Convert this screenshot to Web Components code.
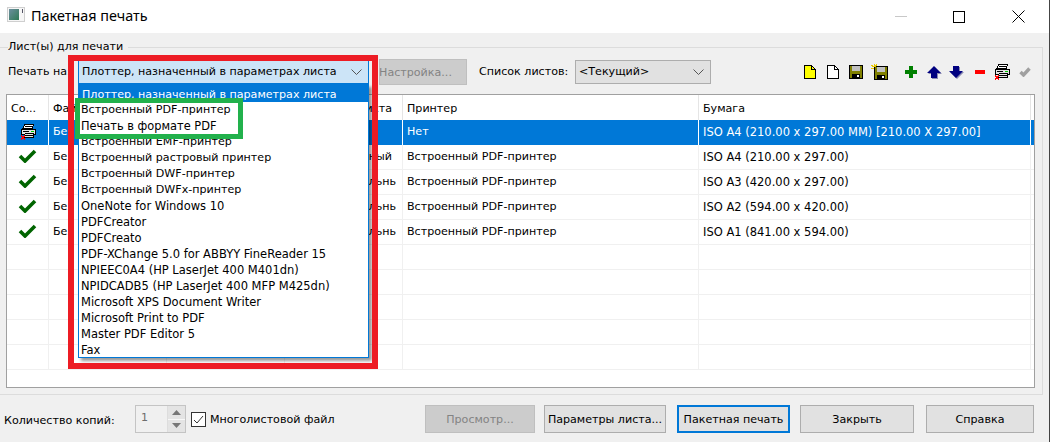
<!DOCTYPE html>
<html><head><meta charset="utf-8"><style>
html,body{margin:0;padding:0;background:#f0f0f0}
body{font:12px/16px "DejaVu Sans",sans-serif;color:#000;width:1050px;height:442px;overflow:hidden}
</style></head><body>
<batch-dialog></batch-dialog>
<script>
const F='"DejaVu Sans",sans-serif';
const fs='11.1px';
const lat='11.5px';
const printerArt=`<path d="M4.5 .5h9l-1.5 4h-9z" fill="#fff" stroke="#000"/><path d="M5 2h7" stroke="#000"/><path d="M1.5 5.5h13.5v5h-2v3h-9v-3h-2.5z" fill="#e4e4e4" stroke="#000"/><path d="M3 7h6M5 9h9M5 11h8" stroke="#000"/><rect x="11" y="7" width="3" height="1" fill="#0c0"/><path d="M1 11h1v1h2v-1h1v2h-1v1h1v2h-1v-1h-2v1h-1v-2h1v-1h-1z" fill="#f00" transform="translate(-.5 0)"/>`;
class TitleBar extends HTMLElement{constructor(){super();this.attachShadow({mode:'open'}).innerHTML=`<style>
:host{display:flex;align-items:center;height:33px;background:#fff;flex:none;position:relative}
.ic{margin:-4px 0 0 7px;width:18px;height:15px;flex:none}
.t{margin:-1px 0 0 6px;font:14.4px/20px "Noto Sans",sans-serif;color:#000}
.c{margin-left:auto;display:flex;align-items:center}
svg{display:block}
</style>
<svg class="ic" viewBox="0 0 18 15" shape-rendering="crispEdges"><defs><linearGradient id="g" x1="0" y1="0" x2="1" y2="1"><stop offset="0" stop-color="#6d8f9f"/><stop offset="1" stop-color="#2f7a55"/></linearGradient></defs><rect width="18" height="15" fill="#cfcfcf"/><rect x="1" y="1" width="16" height="13" fill="#f6f6f6"/><rect x="2" y="2" width="10" height="11" fill="url(#g)"/><rect x="15" y="2" width="1" height="4" fill="#556"/></svg>
<span class="t">Пакетная печать</span>
<div class="c"><svg width="12" height="12" viewBox="0 0 12 12" style="margin-right:46px"><rect y="5" width="12" height="1" fill="#c8c8c8"/></svg>
<svg width="12" height="12" viewBox="0 0 12 12" style="margin-right:47px"><rect x=".5" y=".5" width="11" height="11" fill="none" stroke="#000"/></svg>
<svg width="13" height="13" viewBox="0 0 13 13" style="margin-right:24px"><path d="M.5.5l12 12M12.5.5l-12 12" stroke="#000" fill="none"/></svg></div>`}}
customElements.define('title-bar',TitleBar);

class WinBtn extends HTMLElement{constructor(){super();this.attachShadow({mode:'open'}).innerHTML=`<style>
:host{display:flex;align-items:center;justify-content:center;box-sizing:border-box;height:28px;padding-top:1px;background:#e1e1e1;border:1px solid #adadad;font:${fs}/16px ${F};color:#000;flex:none;white-space:nowrap}
:host([disabled]){background:#ccc;border-color:#bfbfbf;color:#838383}
:host([def]){border:2px solid #0078d7}
</style><slot></slot>`}}
customElements.define('win-btn',WinBtn);

class ComboBox extends HTMLElement{constructor(){super();this.attachShadow({mode:'open'}).innerHTML=`<style>
:host{display:flex;align-items:center;box-sizing:border-box;height:24px;background:#e1e1e1;border:1px solid #adadad;font:${fs}/16px ${F};padding:0 6px 0 3px;flex:none;white-space:nowrap}
:host([active]){background:#cce4f7;border-color:#0078d7}
svg{margin-left:auto;display:block}
</style><slot></slot><svg width="11" height="6" viewBox="0 0 11 6"><path d="M.5.5l5 5 5-5" fill="none" stroke="#555"/></svg>`}}
customElements.define('combo-box',ComboBox);

class ToolBar extends HTMLElement{constructor(){super();
const doc=(fill)=>`<svg width="12" height="14" viewBox="0 0 12 14" shape-rendering="crispEdges"><path d="M.5.5h7l4 4v9h-11z" fill="${fill}" stroke="#000"/><path d="M7.5.5v4h4" fill="none" stroke="#000"/></svg>`;
const floppy=`<rect x=".5" y=".5" width="13" height="13" fill="#808000" stroke="#000"/><rect x="3" y="1" width="8" height="5" fill="#c0c0c0"/><rect x="3" y="9" width="8" height="4" fill="#000"/><rect x="8" y="10" width="2" height="2" fill="#fff"/>`;
this.attachShadow({mode:'open'}).innerHTML=`<style>
:host{display:flex;align-items:center;flex:none;height:20px}
svg{display:block;flex:none}
</style>
${doc('#ff0')}<span style="width:11px"></span>${doc('#fff')}<span style="width:10px"></span>
<svg width="14" height="14" viewBox="0 0 14 14" shape-rendering="crispEdges">${floppy}</svg>
<span style="width:8px"></span>
<svg width="17" height="16" viewBox="0 0 17 16" shape-rendering="crispEdges"><g transform="translate(3 2)">${floppy}</g><path d="M0 1l3 2M3 0v3M6 0L4 3M0 4h3" stroke="#e8c800"/></svg>
<span style="width:17px"></span>
<svg width="12" height="12" viewBox="0 0 12 12" shape-rendering="crispEdges"><path d="M4 0h4v4h4v4H8v4H4V8H0V4h4z" fill="#008000"/></svg>
<span style="width:10px"></span>
<svg width="15" height="13" viewBox="0 0 15 13"><path d="M8 1l7 7h-4v5H5V8H1z" fill="#8a8ab0"/><path d="M7 0l7 7h-4v5H4V7H0z" fill="#000080"/></svg>
<span style="width:7px"></span>
<svg width="15" height="13" viewBox="0 0 15 13"><path d="M8 13L1 6h4V1h6v5h4z" fill="#8a8ab0"/><path d="M7 12L0 5h4V0h6v5h4z" fill="#000080"/></svg>
<span style="width:11px"></span>
<svg width="10" height="4" viewBox="0 0 10 4"><rect width="10" height="4" fill="#f00"/></svg>
<span style="width:9px"></span>
<svg width="16" height="17" viewBox="0 0 16 17" shape-rendering="crispEdges">${printerArt}</svg>
<span style="width:9px"></span>
<svg width="12" height="10" viewBox="0 0 12 10"><path d="M1.5 5l3 3 6-6.5" fill="none" stroke="#a0a0a0" stroke-width="3.4"/></svg>`}}
customElements.define('tool-bar',ToolBar);

class SheetGrid extends HTMLElement{constructor(){super();
const cols='42px 118px 118px 118px 296px 332px 1fr';
const ck=`<svg width="19" height="14" viewBox="0 0 19 14"><path d="M2 7l5 5L17 2" fill="none" stroke="#006400" stroke-width="3.6"/></svg>`;
const pr=`<svg width="16" height="17" viewBox="0 0 16 17" shape-rendering="crispEdges">${printerArt}</svg>`;
const row=(ic,o,p,b,sel,pad)=>`<div class="r${sel?' sel':''}"><div class="c ic">${ic}</div><div class="c">Без</div><div class="c"></div><div class="c end" style="padding-right:${pad||10}px">${o}</div><div class="c">${p}</div><div class="c lat">${b}</div><div class="c x"></div></div>`;
const P='Встроенный PDF-принтер';
let empties='';for(let i=0;i<5;i++)empties+=`<div class="r"><div class="c"></div><div class="c"></div><div class="c"></div><div class="c"></div><div class="c"></div><div class="c"></div><div class="c x"></div></div>`;
this.attachShadow({mode:'open'}).innerHTML=`<style>
:host{display:block;box-sizing:border-box;height:294px;border:1px solid #a0a0a0;background:#fff;overflow:hidden;flex:none;font:${fs}/16px ${F}}
.r{display:grid;grid-template-columns:${cols};height:25px;box-sizing:border-box;border-bottom:1px solid #f0f0f0}
.h{border-bottom:0}
.c{border-right:1px solid #f0f0f0;padding:4px 0 0 4px;white-space:nowrap;overflow:hidden;box-sizing:border-box}
.h .c{border-right:1px solid #e5e5e5;padding-top:6px}
.x{border-right:0!important;padding:0}
.lat{font-size:${lat}}
.end{text-align:right;padding-left:0}
.ic{padding:4px 0 0 0;display:flex;justify-content:center}
.sel{background:#0078d7;color:#fff;border-bottom:0}
.sel .c{border-right:1px solid #fff}
svg{display:block}
</style>
<div class="r h"><div class="c">Со...</div><div class="c">Файл</div><div class="c"></div><div class="c end" style="padding-right:10px">листа</div><div class="c">Принтер</div><div class="c">Бумага</div><div class="c x"></div></div>
${row(pr,'','Нет','ISO A4 (210.00 x 297.00 MM) [210.00 X 297.00]',1)}
${row(ck,'ный',P,'ISO A4 (210.00 x 297.00)',0,10)}
${row(ck,'альнь',P,'ISO A3 (420.00 x 297.00)',0,6)}
${row(ck,'альнь',P,'ISO A2 (594.00 x 420.00)',0,6)}
${row(ck,'альнь',P,'ISO A1 (841.00 x 594.00)',0,6)}
${empties}`}}
customElements.define('sheet-grid',SheetGrid);

class DropList extends HTMLElement{constructor(){super();
const items=[['Встроенный PDF-принтер'],['Печать в формате PDF',1],['Встроенный EMF-принтер'],['Встроенный растровый принтер'],['Встроенный DWF-принтер'],['Встроенный DWFx-принтер'],['OneNote for Windows 10',2],['PDFCreator',2],['PDFCreato',2],['PDF-XChange 5.0 for ABBYY FineReader 15',2],['NPIEEC0A4 (HP LaserJet 400 M401dn)',2],['NPIDCADB5 (HP LaserJet 400 MFP M425dn)',2],['Microsoft XPS Document Writer',2],['Microsoft Print to PDF',2],['Master PDF Editor 5',2],['Fax',2]];
const size=k=>k===1?'11.4px':k===2?lat:fs;
this.attachShadow({mode:'open'}).innerHTML=`<style>
:host{position:absolute;left:78px;top:84px;width:291px;box-sizing:border-box;height:274px;background:#fff;border:1px solid #0078d7;box-shadow:3px 3px 3px rgba(0,0,0,.4);font:${fs}/16px ${F};z-index:2}
div{height:16px;padding-left:2px;white-space:nowrap}
.s{background:#0078d7;color:#fff;height:15px;padding:2px 0 0 3px}
</style><div class="s">Плоттер, назначенный в параметрах листа</div>${items.map(([t,k])=>`<div style="font-size:${size(k)}">${t}</div>`).join('')}`}}
customElements.define('drop-list',DropList);

class BatchDialog extends HTMLElement{constructor(){super();this.attachShadow({mode:'open'}).innerHTML=`<style>
:host{display:flex;flex-direction:column;box-sizing:border-box;position:relative;width:1050px;height:442px;background:#f0f0f0;border-right:1px solid #444;font:${fs}/16px ${F};overflow:hidden}
fieldset{box-sizing:border-box;width:1043px;margin:6px 0 0;padding:0;min-width:0;border:1px solid #dcdcdc;border-left:0;flex:none}
legend{margin-left:8px;padding:0 5px 0 0;height:16px;line-height:16px;display:block}
.row{display:flex;align-items:center;height:26px;margin-top:4px;padding-left:8px}
.bot{display:flex;align-items:center;height:28px;flex:none;margin-top:10px;padding-left:4px}
.spin{display:flex;box-sizing:border-box;width:51px;height:28px;margin-left:21px;border:1px solid #c4c4c4;flex:none;color:#6d6d6d;background:#f0f0f0}
.spin b{font-weight:400;flex:1;padding:4px 0 0 5px}
.arr{width:17px;display:flex;flex-direction:column;background:#e4e4e4;border-left:1px solid #ddd}
.arr span{flex:1;display:flex;align-items:center;justify-content:center}
.arr span+span{border-top:1px solid #f8f8f8}
.cb{box-sizing:border-box;width:15px;height:15px;border:1px solid #333;background:#fff;margin:1px 4px 0 5px;flex:none}
.lb{padding-top:4px;white-space:nowrap;flex:none}
.red{position:absolute;left:68px;top:55px;width:310px;height:314px;box-sizing:border-box;border:6px solid #ed1c24;z-index:3;pointer-events:none}
.green{position:absolute;left:75px;top:98px;width:168px;height:41px;box-sizing:border-box;border:5px solid #22b14c;z-index:3}
svg{display:block}
</style>
<title-bar></title-bar>
<fieldset><legend>Лист(ы) для печати</legend>
<div class="row">
<span style="width:70px;white-space:nowrap;overflow:hidden;flex:none">Печать на:</span>
<combo-box active style="width:291px">Плоттер, назначенный в параметрах листа</combo-box>
<win-btn disabled style="width:88px;height:26px;margin-left:10px;margin-right:12px;padding-right:15px">Настройка...</win-btn>
<span style="white-space:nowrap;width:96px;flex:none">Список листов:</span>
<combo-box style="width:136px">&lt;Текущий&gt;</combo-box>
<tool-bar style="margin-left:93px"></tool-bar>
</div>
<sheet-grid style="margin:9px 0 6px 6px;width:1029px"></sheet-grid>
</fieldset>
<div class="bot">
<span class="lb" style="width:110px">Количество копий:</span>
<div class="spin"><b>1</b><div class="arr"><span><svg width="9" height="5" viewBox="0 0 9 5"><path d="M4.5 0L9 5H0z" fill="#777"/></svg></span><span><svg width="9" height="5" viewBox="0 0 9 5"><path d="M4.5 5L9 0H0z" fill="#777"/></svg></span></div></div>
<div class="cb"><svg width="13" height="13" viewBox="0 0 13 13"><path d="M2 7l3 3 6-7" fill="none" stroke="#333"/></svg></div>
<span class="lb" style="width:215px;padding-top:1px">Многолистовой файл</span>
<win-btn disabled style="width:110px">Просмотр...</win-btn>
<win-btn style="width:122px;margin-left:9px">Параметры листа...</win-btn>
<win-btn def style="width:113px;margin-left:11px">Пакетная печать</win-btn>
<win-btn style="width:114px;margin-left:10px">Закрыть</win-btn>
<win-btn style="width:108px;margin-left:12px">Справка</win-btn>
</div>
<drop-list></drop-list>
<div class="green"></div>
<div class="red"></div>`}}
customElements.define('batch-dialog',BatchDialog);
</script>
</body></html>
